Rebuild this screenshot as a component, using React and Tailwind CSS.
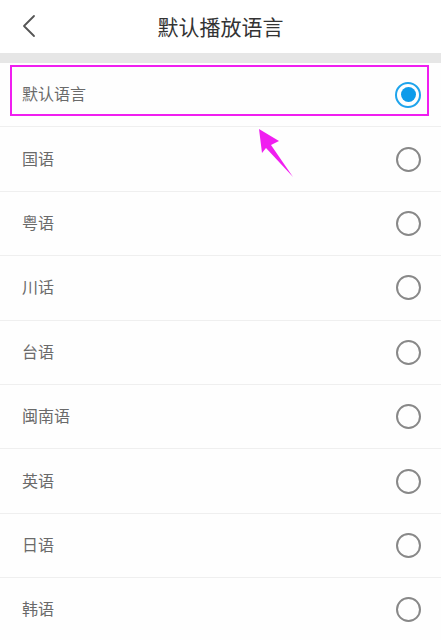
import React from "react";

const items = ["默认语言", "国语", "粤语", "川话", "台语", "闽南语", "英语", "日语", "韩语"];

function Radio({ checked }) {
  if (checked) {
    return (
      <div className="w-[26px] h-[26px] rounded-full border-[2px] border-[#1ea4ec] flex items-center justify-center">
        <div className="w-[15px] h-[15px] rounded-full bg-[#0d9bea]" />
      </div>
    );
  }
  return <div className="w-[25px] h-[25px] rounded-full border-[2px] border-[#888888]" />;
}

export default function App() {
  return (
    <div
      className="relative w-[441px] h-[640px] overflow-hidden bg-white"
      style={{ fontFamily: '"Noto Sans CJK SC", "Noto Sans", sans-serif' }}
    >
      <div className="relative h-[53px] flex items-center justify-center bg-white">
        <svg className="absolute left-[20px] top-[14px]" width="18" height="24" viewBox="0 0 18 24">
          <path d="M14 2 L4 12 L14 22" fill="none" stroke="#555" strokeWidth="1.8" strokeLinecap="round" strokeLinejoin="round" />
        </svg>
        <span className="text-[21px] text-[#333] leading-none">默认播放语言</span>
      </div>
      <div className="h-[10px] bg-[#e6e6e6]" />
      <div className="flex flex-col">
        {items.map((t, i) => (
          <div
            key={t}
            className="h-[64.4px] shrink-0 flex items-center justify-between pl-[22px] pr-[20px] border-b border-[#efefef] bg-[#fefefe]"
          >
            <span className="text-[16px] text-[#6a6a6a] leading-none -mt-[3px]">{t}</span>
            <Radio checked={i === 0} />
          </div>
        ))}
      </div>
      <div className="absolute left-[10px] top-[65px] w-[419px] h-[51px] border-2 border-[#f01ef0]" />
      <svg className="absolute left-0 top-0 pointer-events-none" width="441" height="640">
        <polygon points="259,129 279,141 271,145 293,177 266,148 262,153" fill="#f01ef0" />
      </svg>
    </div>
  );
}
